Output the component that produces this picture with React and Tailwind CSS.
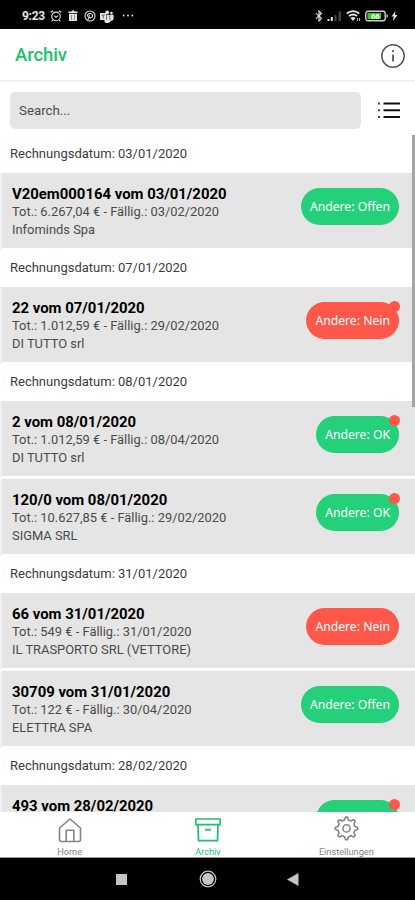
import React from 'react';
import clsx from 'clsx';

const sections = [
  {
    date: '03/01/2020',
    invoices: [
      { title: 'V20em000164 vom 03/01/2020', total: '6.267,04 €', due: '03/02/2020', customer: 'Infominds Spa', status: 'Offen' },
    ],
  },
  {
    date: '07/01/2020',
    invoices: [
      { title: '22 vom 07/01/2020', total: '1.012,59 €', due: '29/02/2020', customer: 'DI TUTTO srl', status: 'Nein', unread: true },
    ],
  },
  {
    date: '08/01/2020',
    invoices: [
      { title: '2 vom 08/01/2020', total: '1.012,59 €', due: '08/04/2020', customer: 'DI TUTTO srl', status: 'OK', unread: true },
      { title: '120/0 vom 08/01/2020', total: '10.627,85 €', due: '29/02/2020', customer: 'SIGMA SRL', status: 'OK', unread: true },
    ],
  },
  {
    date: '31/01/2020',
    invoices: [
      { title: '66 vom 31/01/2020', total: '549 €', due: '31/01/2020', customer: 'IL TRASPORTO SRL (VETTORE)', status: 'Nein' },
      { title: '30709 vom 31/01/2020', total: '122 €', due: '30/04/2020', customer: 'ELETTRA SPA', status: 'Offen' },
    ],
  },
  {
    date: '28/02/2020',
    invoices: [{ title: '493 vom 28/02/2020', status: 'OK', unread: true }],
  },
];

const StatusBar = () => (
  <div className="flex h-[29px] shrink-0 items-center bg-black pt-[3px] pl-[22px] pr-[17px] text-[#e4e4e4]">
    <span className="w-[23px] text-[12px] font-bold leading-none tracking-[-0.3px]">9:23</span>
    <svg className="ml-[5px] h-3 w-3" viewBox="0 0 12 12" fill="none" stroke="currentColor" strokeWidth="1.1">
      <circle cx="6" cy="6.4" r="4.3" />
      <path d="M.7 2.5 3 .8M11.3 2.5 9 .8M2.7 10l-1 1.5M9.3 10l1 1.5M4 5.6l2 1.7 2-1.7" />
    </svg>
    <svg className="ml-[6px] h-3 w-[10px]" viewBox="0 0 10 12" fill="currentColor">
      <path d="M.5 1.5h3l.5-1h2l.5 1h3v1.5h-9zM1 3.7h8V11H1z" />
      <path d="M3.5 5v5M6.5 5v5" stroke="#777" strokeWidth=".8" />
    </svg>
    <svg className="ml-[6px] h-3 w-3" viewBox="0 0 12 12" fill="none" stroke="currentColor" strokeWidth="1.1">
      <circle cx="6" cy="6" r="5" />
      <path d="M4 9.5 5.600 5M3.600 6.600a2.600 2.300 0 1 1 4.600.4c-.9 1.300-2.500 1-3 .2" />
    </svg>
    <svg className="ml-[4px] h-[13px] w-[14px]" viewBox="0 0 14 13" fill="currentColor">
      <circle cx="7.2" cy="2.3" r="1.9" />
      <circle cx="11.4" cy="3.1" r="1.3" />
      <path d="M0 3h6.5v7H0zM7 4.8h6.6v4A2.2 2.2 0 0 1 11 10.6 4 4 0 0 1 4.5 12V10H7z" />
      <path d="M1.5 5h3.6M3.3 5v3.5M9.8 5v5" stroke="#555" strokeWidth=".8" />
    </svg>
    <svg className="ml-[8px] h-3 w-3" viewBox="0 0 12 12" fill="currentColor">
      <circle cx="1.7" cy="5.5" r=".9" />
      <circle cx="6" cy="5.5" r=".9" />
      <circle cx="10.3" cy="5.5" r=".9" />
    </svg>
    <div className="ml-auto flex items-center">
      <svg className="h-3 w-2" viewBox="0 0 8 12" fill="none" stroke="currentColor" strokeWidth="1.1">
        <path d="m1 3.3 5.5 5L4 11V1l2.5 2.5L1 8.7" />
      </svg>
      <svg className="ml-[4px] h-3 w-[15px]" viewBox="0 0 15 12">
        <path d="M.5 9h2v2h-2zM3.8 7h2v4h-2z" fill="#e4e4e4" />
        <path d="M7.5 5h2v6h-2zM11.5 1.5h2.5V11h-2.5z" fill="#444" />
      </svg>
      <svg className="ml-[4px] h-3 w-[15px]" viewBox="0 0 15 12" fill="none" stroke="currentColor" strokeWidth="1.9">
        <path d="M.8 3.6C4.5.5 9.5.5 13.2 3.6M3 6.1c2.5-2 5.500-2 8 0" />
        <path d="M4.300 7.800q2.700-1.500 5.400 0L7 11z" fill="currentColor" stroke="none" />
        <path d="M11.500 8v3M13.500 8v3" strokeWidth=".8" />
      </svg>
      <svg className="ml-[4px] h-3 w-[24px]" viewBox="0 0 24 12">
        <rect x=".8" y="1.3" width="19.4" height="9.4" rx="2.2" fill="none" stroke="#d0d0d0" strokeWidth="1.4" />
        <rect x="2.5" y="3" width="13.500" height="6" fill="#45c51d" />
        <path d="M21.500 4q1.500.3 1.500 2t-1.500 2z" fill="#d0d0d0" />
        <text x="10.3" y="8.7" textAnchor="middle" fontSize="7.5" fontWeight="700" fill="#fff">66</text>
      </svg>
      <svg className="ml-[2px] h-3 w-[7px]" viewBox="0 0 7 12" fill="currentColor">
        <path d="M4.500 1 .5 6.500h2.300L2 11l4.500-6H4z" />
      </svg>
    </div>
  </div>
);

const Header = () => (
  <header className="flex h-[53px] shrink-0 items-center justify-between border-b-2 border-[#f1f1f1] pt-[2px] pl-[15px] pr-[9px]">
    <h1 className="text-[18.5px] font-medium tracking-[-0.1px] text-[#1fbf71]">Archiv</h1>
    <svg className="h-[26px] w-[26px]" viewBox="0 0 26 26" fill="none" stroke="#555" strokeWidth="1.5">
      <circle cx="13" cy="13" r="11.2" />
      <path d="M13 11.7v6.8" strokeWidth="1.8" />
      <circle cx="13" cy="8.2" r="1.1" fill="#555" stroke="none" />
    </svg>
  </header>
);

const SearchRow = () => (
  <div className="flex h-[53px] shrink-0 items-start pt-[10px] pl-[10px] pr-[15px]">
    <div className="flex h-[37px] w-[351px] items-center rounded-[5px] bg-[#e5e5e5] pl-[9px] text-[13.3px] text-[#4a4a4a]">
      Search...
    </div>
    <svg className="mt-[8px] ml-auto h-5 w-[23px]" viewBox="0 0 23 20" stroke="#111" strokeWidth="1.9">
      <path d="M6.5 3.5H23M6.5 10.3H23M6.5 17H23" />
      <path d="M1 3.5h2M1 10.3h2M1 17h2" stroke="#444" />
    </svg>
  </div>
);

const InvoiceRow = ({ invoice }) => (
  <li className="flex h-[78px] items-start justify-between border-b-[3px] border-l-2 border-b-white border-l-[#f0f0f0] bg-[#e5e5e5] pt-[12px] pl-[10px] pr-4">
    <div className="text-[12.9px] leading-[18px] text-[#4a4a4a]">
      <p className="text-[14.9px] font-bold text-black">{invoice.title}</p>
      {invoice.total && (
        <p>
          Tot.: {invoice.total} - Fällig.: {invoice.due}
        </p>
      )}
      {invoice.customer && <p>{invoice.customer}</p>}
    </div>
    <div
      className={clsx(
        'relative mt-[3px] flex h-[36.5px] items-center rounded-full px-[9px] pt-px font-["Noto_Sans",sans-serif] text-[12.2px] text-white',
        invoice.status === 'Nein' ? 'bg-[#ff574a]' : 'bg-[#25d07a]'
      )}
    >
      Andere: {invoice.status}
      {invoice.unread && <span className="absolute -top-px -right-px h-[11px] w-[11px] rounded-full bg-[#ff574a]" />}
    </div>
  </li>
);

const HomeIcon = () => (
  <svg className="h-[26px] w-[26px]" viewBox="0 0 26 26" fill="none" stroke="currentColor" strokeWidth="1.6" strokeLinejoin="round">
    <path d="M2.5 11 13 2l10.5 9v11.500a2 2 0 0 1-2 2h-17a2 2 0 0 1-2-2z" />
    <path d="M9.2 24.500V13.300h7.600v11.200" />
  </svg>
);

const ArchiveIcon = () => (
  <svg className="h-[26px] w-[28px]" viewBox="0 0 28 26" fill="none" stroke="currentColor" strokeWidth="1.7" strokeLinejoin="round">
    <path d="M1.800 2h24.400v5.700H1.800zM4 7.700l.5 16h19l.5-16" />
    <path d="M11 12.700h6" strokeWidth="1.800" />
  </svg>
);

const SettingsIcon = () => (
  <svg className="h-[27px] w-[27px]" viewBox="0 0 24 24" fill="none" stroke="currentColor" strokeWidth="1.4" strokeLinejoin="round">
    <path d="M10.200 3.500 11.200 1h1.600l1 2.500 2.100.9 2.500-1.100 1.300 1.300-1.100 2.500.9 2.100 2.500 1v1.600l-2.500 1-.9 2.100 1.100 2.500-1.300 1.300-2.500-1.100-2.100.9-1 2.500h-1.600l-1-2.500-2.100-.9-2.500 1.100-1.300-1.300 1.100-2.500-.9-2.100-2.500-1v-1.600l2.500-1 .9-2.100-1.100-2.500 1.300-1.300 2.500 1.100z" />
    <circle cx="12" cy="11" r="3.2" />
  </svg>
);

const tabs = [
  { label: 'Home', Icon: HomeIcon },
  { label: 'Archiv', Icon: ArchiveIcon, active: true },
  { label: 'Einstellungen', Icon: SettingsIcon },
];

const TabBar = () => (
  <nav className="grid h-[46px] shrink-0 grid-cols-3 border-b border-[#999] bg-white">
    {tabs.map(({ label, Icon, active }) => (
      <div key={label} className={clsx('flex flex-col items-center pt-1 pl-px', active ? 'text-[#1fbf71]' : 'text-[#858585]')}>
        <div className="flex h-[27px] items-center">
          <Icon />
        </div>
        <span className="mt-[3px] text-[9.2px] leading-[11px]">{label}</span>
      </div>
    ))}
  </nav>
);

const SystemNav = () => (
  <div className="flex h-[42px] shrink-0 items-center bg-black pl-[116px] text-[#c4c4c4]">
    <div className="h-[11px] w-[11px] bg-[#c4c4c4]" />
    <svg className="ml-[72px] h-[18px] w-[18px]" viewBox="0 0 18 18">
      <circle cx="9" cy="9" r="7.8" fill="none" stroke="currentColor" strokeWidth="1.2" />
      <circle cx="9" cy="9" r="5.9" fill="currentColor" />
    </svg>
    <svg className="ml-[70px] h-[13px] w-[12px]" viewBox="0 0 12 13" fill="currentColor">
      <path d="M0 6.500 11.500 0v13z" />
    </svg>
  </div>
);

const App = () => {
  return (
    <div className="flex h-[900px] w-[415px] flex-col overflow-hidden bg-white font-[Roboto,sans-serif]">
      <StatusBar />
      <Header />
      <SearchRow />
      <main className="relative min-h-0 flex-1 overflow-hidden pt-[2px]">
        {sections.map((section) => (
          <section key={section.date}>
            <h2 className="flex h-9 items-center pl-[10px] pb-[2px] text-[13px] text-[#3c3c3c]">
              Rechnungsdatum: {section.date}
            </h2>
            <ul>
              {section.invoices.map((invoice) => (
                <InvoiceRow key={invoice.title} invoice={invoice} />
              ))}
            </ul>
          </section>
        ))}
        <div className="absolute top-0 right-0 h-[272px] w-[3px] bg-[#a5a5a5]" />
      </main>
      <TabBar />
      <SystemNav />
    </div>
  );
};

export default App;
